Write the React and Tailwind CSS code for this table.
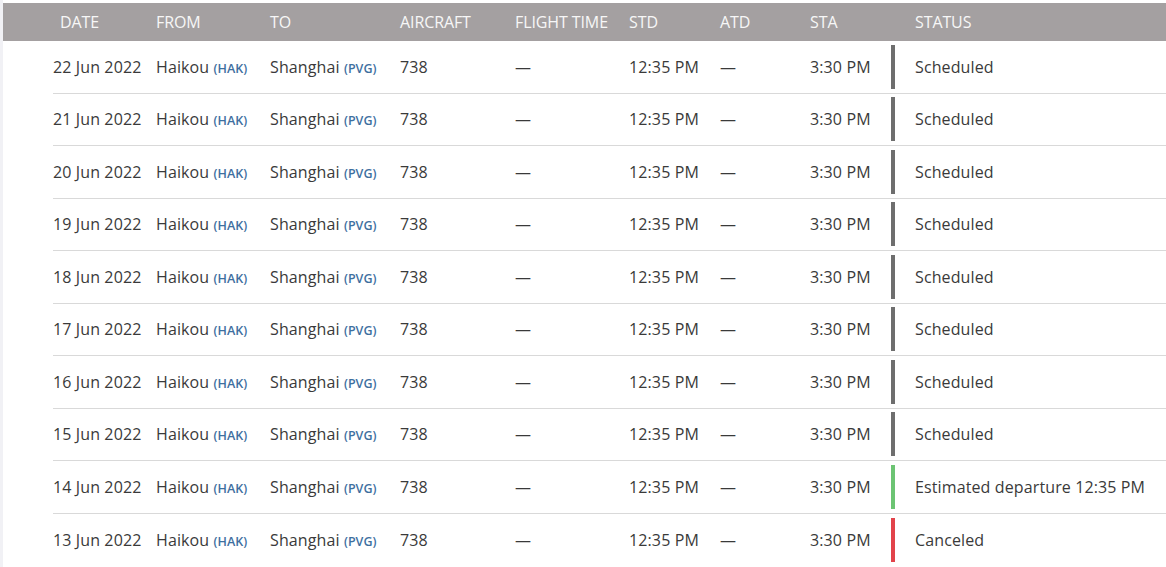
import React from "react";

const rows = [
  { d: "22 Jun 2022", s: "Scheduled", c: "gray" },
  { d: "21 Jun 2022", s: "Scheduled", c: "gray" },
  { d: "20 Jun 2022", s: "Scheduled", c: "gray" },
  { d: "19 Jun 2022", s: "Scheduled", c: "gray" },
  { d: "18 Jun 2022", s: "Scheduled", c: "gray" },
  { d: "17 Jun 2022", s: "Scheduled", c: "gray" },
  { d: "16 Jun 2022", s: "Scheduled", c: "gray" },
  { d: "15 Jun 2022", s: "Scheduled", c: "gray" },
  { d: "14 Jun 2022", s: "Estimated departure 12:35 PM", c: "green" },
  { d: "13 Jun 2022", s: "Canceled", c: "red" },
];

const barClass = {
  gray: "bg-[#6e6e6e]",
  green: "bg-[#6cc473]",
  red: "bg-[#e2434b]",
};

export default function App() {
  return (
    <div
      className="flex min-h-[567px] bg-white text-[#3a3a3a]"
      style={{ fontFamily: '"Open Sans", "Noto Sans", sans-serif' }}
    >
      <div className="w-[3px] shrink-0 bg-[#f1f1f5]" />
      <div className="flex-1 pt-[3px]">
        <div className="flex h-[38px] items-center bg-[#a4a0a1] text-[16px] tracking-[-0.1px] text-[#f7f7f7]">
          <div className="w-[153px] pl-[57px]">DATE</div>
          <div className="w-[114px]">FROM</div>
          <div className="w-[130px]">TO</div>
          <div className="w-[115px]">AIRCRAFT</div>
          <div className="w-[114px]">FLIGHT TIME</div>
          <div className="w-[91px]">STD</div>
          <div className="w-[90px]">ATD</div>
          <div className="w-[105px]">STA</div>
          <div>STATUS</div>
        </div>
        <div className="ml-[50px]">
          {rows.map((r, i) => (
            <div
              key={i}
              className={`flex h-[52.5px] items-center text-[16px] tracking-[0.12px] ${
                i < rows.length - 1 ? "border-b border-[#d9d9d9]" : ""
              }`}
            >
              <div className="w-[103px]">{r.d}</div>
              <div className="w-[114px]">
                Haikou{" "}
                <span className="text-[12.5px] font-semibold tracking-normal text-[#3e6f9f]">(HAK)</span>
              </div>
              <div className="w-[130px]">
                Shanghai{" "}
                <span className="text-[12.5px] font-semibold tracking-normal text-[#3e6f9f]">(PVG)</span>
              </div>
              <div className="w-[115px]">738</div>
              <div className="w-[114px]">—</div>
              <div className="w-[91px]">12:35 PM</div>
              <div className="w-[90px]">—</div>
              <div className="w-[81px]">3:30 PM</div>
              <div className="flex h-full items-center">
                <div className={`h-[44px] w-[4px] ${barClass[r.c]}`} />
                <div className="pl-[20px]">{r.s}</div>
              </div>
            </div>
          ))}
        </div>
      </div>
    </div>
  );
}
